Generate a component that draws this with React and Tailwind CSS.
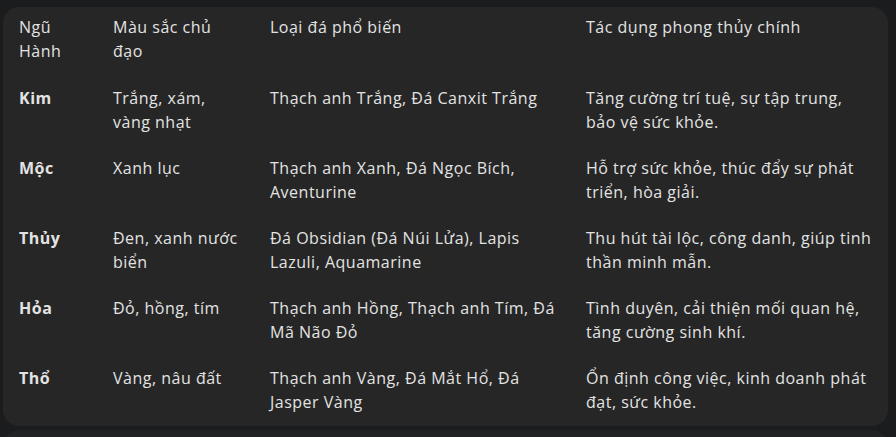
import React from 'react';

const rows = [
  ['Kim', 'Trắng, xám, vàng nhạt', 'Thạch anh Trắng, Đá Canxit Trắng', 'Tăng cường trí tuệ, sự tập trung, bảo vệ sức khỏe.'],
  ['Mộc', 'Xanh lục', 'Thạch anh Xanh, Đá Ngọc Bích, Aventurine', 'Hỗ trợ sức khỏe, thúc đẩy sự phát triển, hòa giải.'],
  ['Thủy', 'Đen, xanh nước biển', 'Đá Obsidian (Đá Núi Lửa), Lapis Lazuli, Aquamarine', 'Thu hút tài lộc, công danh, giúp tinh thần minh mẫn.'],
  ['Hỏa', 'Đỏ, hồng, tím', 'Thạch anh Hồng, Thạch anh Tím, Đá Mã Não Đỏ', 'Tình duyên, cải thiện mối quan hệ, tăng cường sinh khí.'],
  ['Thổ', 'Vàng, nâu đất', 'Thạch anh Vàng, Đá Mắt Hổ, Đá Jasper Vàng', 'Ổn định công việc, kinh doanh phát đạt, sức khỏe.'],
];

const headers = ['Ngũ Hành', 'Màu sắc chủ đạo', 'Loại đá phổ biến', 'Tác dụng phong thủy chính'];

const App = () => {
  return (
    <div className="w-[896px] h-[437px] overflow-hidden bg-[#1b1c1d] pt-[7px] font-['Open_Sans',sans-serif] text-[16px] leading-[24px] tracking-[0.5px] text-[#e3e3e3]">
      <div className="ml-[3px] w-[885px] rounded-[16px] bg-[#262626] pt-[8px] pb-[1px]">
        <div className="grid grid-cols-[94px_157px_316px_1fr] pb-[12px]">
          {headers.map((h) => (
            <div key={h} className="px-4">{h}</div>
          ))}
        </div>
        {rows.map((r) => (
          <div key={r[0]} className="grid grid-cols-[94px_157px_316px_1fr] py-[11px]">
            <div className="px-4 font-bold">{r[0]}</div>
            <div className="px-4">{r[1]}</div>
            <div className="pl-4 pr-[8px]">{r[2]}</div>
            <div className="px-4">{r[3]}</div>
          </div>
        ))}
      </div>
      <div className="mt-[4px] ml-[3px] w-[885px] h-[20px] rounded-t-[16px] bg-[#212223]" />
    </div>
  );
};

export default App;
